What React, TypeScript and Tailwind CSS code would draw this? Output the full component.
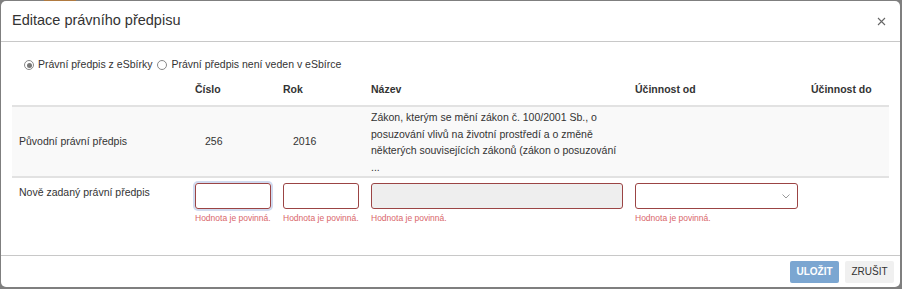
import React from "react";

const err = "text-[8.5px] text-[#d9666a] mt-[4px] leading-[10px] whitespace-nowrap";

export default function App() {
  return (
    <div className="h-[289px] w-[902px] bg-[#7f7f7f] pt-[1px] pl-[1px] pr-[2px] pb-[2px] relative overflow-hidden" style={{ fontFamily: '"Liberation Sans", Arial, sans-serif' }}>
      <div className="absolute left-[44px] top-0 h-[2px] w-[32px] bg-[#b07a40]" />
      <div className="relative h-full w-full bg-white rounded-[5px] flex flex-col text-[#333]">
        <div className="h-[41px] border-b border-[#c8c8c8] flex items-center justify-between pl-[11px] pr-[14px]">
          <div className="text-[14.5px] text-[#333] pb-[1px]">Editace právního předpisu</div>
          <svg width="9" height="9" viewBox="0 0 9 9" className="mt-[1px]">
            <path d="M1 1L8 8M8 1L1 8" stroke="#666" strokeWidth="1.1" />
          </svg>
        </div>
        <div className="flex-1 px-[11px]">
          <div className="flex items-center h-[16px] mt-[15px] pl-[12px] text-[10.5px] text-[#333]">
            <span className="w-[10px] h-[10px] rounded-full border border-[#888] flex items-center justify-center mr-[4px]">
              <span className="w-[5px] h-[5px] rounded-full bg-[#777]" />
            </span>
            <span className="mr-[5px]">Právní předpis z eSbírky</span>
            <span className="w-[10px] h-[10px] rounded-full border border-[#888] mr-[4px]" />
            <span>Právní předpis není veden v eSbírce</span>
          </div>
          <div className="mt-[4px] text-[10.5px]">
            <div className="grid grid-cols-[176px_88px_88px_264px_176px_1fr] h-[30px] items-end pb-[7px] border-b-2 border-[#e2e2e2] font-bold">
              <div />
              <div className="px-[7px]">Číslo</div>
              <div className="px-[7px]">Rok</div>
              <div className="px-[7px]">Název</div>
              <div className="px-[7px]">Účinnost od</div>
              <div className="px-[7px]">Účinnost do</div>
            </div>
            <div className="grid grid-cols-[176px_88px_88px_264px_176px_1fr] h-[71px] items-center bg-[#f9f9f9] border-b-2 border-[#e2e2e2]">
              <div className="px-[7px]">Původní právní předpis</div>
              <div className="pl-[17px]">256</div>
              <div className="pl-[17px]">2016</div>
              <div className="px-[7px] leading-[16.5px] pt-[1px]">
                Zákon, kterým se mění zákon č. 100/2001 Sb., o posuzování vlivů na životní prostředí a o změně některých souvisejících zákonů (zákon o posuzování
                <br />...
              </div>
              <div />
              <div />
            </div>
            <div className="grid grid-cols-[176px_88px_88px_264px_176px_1fr] pt-[5px]">
              <div className="px-[7px] pt-[2px]">Nově zadaný právní předpis</div>
              <div className="px-[7px]">
                <div className="h-[26px] w-[76px] rounded-[3px] border border-[#9b4444] shadow-[0_0_0_2px_rgba(120,150,210,0.35)]" />
                <div className={err}>Hodnota je povinná.</div>
              </div>
              <div className="px-[7px]">
                <div className="h-[26px] w-[76px] rounded-[3px] border border-[#9b4444]" />
                <div className={err}>Hodnota je povinná.</div>
              </div>
              <div className="px-[7px]">
                <div className="h-[26px] w-[252px] rounded-[3px] border border-[#9b4444] bg-[#eeeeee]" />
                <div className={err}>Hodnota je povinná.</div>
              </div>
              <div className="px-[7px]">
                <div className="h-[26px] w-[163px] rounded-[3px] border border-[#9b4444] flex items-center justify-end pr-[7px]">
                  <svg width="8" height="5" viewBox="0 0 8 5">
                    <path d="M0.5 0.5L4 4L7.5 0.5" stroke="#999" strokeWidth="1" fill="none" />
                  </svg>
                </div>
                <div className={err}>Hodnota je povinná.</div>
              </div>
              <div />
            </div>
          </div>
        </div>
        <div className="h-[32px] border-t border-[#c8c8c8] flex items-center justify-end gap-[6px] pr-[6px]">
          <div className="h-[22px] w-[49px] bg-[#7ba6d1] rounded-[2px] text-white font-bold text-[10px] flex items-center justify-center">ULOŽIT</div>
          <div className="h-[22px] w-[49px] bg-[#f0f0f0] rounded-[2px] text-[#333] text-[10px] flex items-center justify-center">ZRUŠIT</div>
        </div>
      </div>
    </div>
  );
}
